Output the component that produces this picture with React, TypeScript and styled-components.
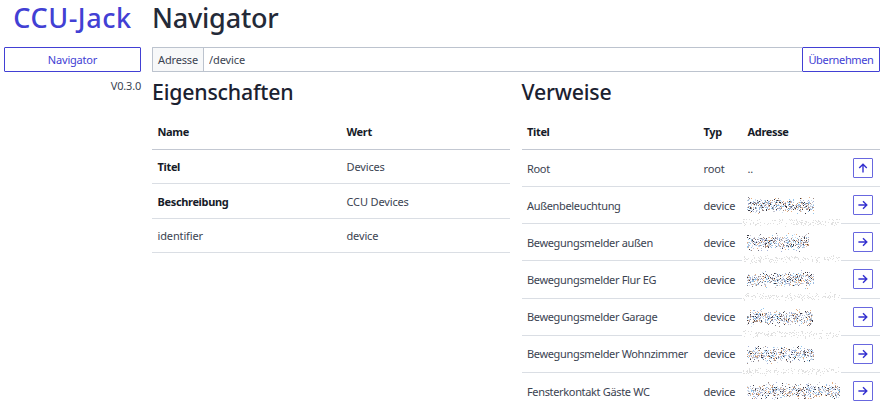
import React from "react";
import styled, { createGlobalStyle } from "styled-components";

const GlobalStyle = createGlobalStyle`
  * { box-sizing: border-box; }
  body {
    margin: 0;
    background: #fff;
    color: #3b4351;
    font: 11px/16px "Segoe UI", "Noto Sans", "Open Sans", sans-serif;
  }
`;

const accent = "#4240d4";

const Page = styled.div`
  display: grid;
  grid-template-columns: 137px 728px;
  column-gap: 11px;
  width: 883px;
  height: 408px;
  padding-left: 4px;
  overflow: hidden;
`;
const Sidebar = styled.aside`
  display: flex;
  flex-direction: column;
`;
const Main = styled.main`
  min-width: 0;
`;
const PageTitle = styled.h1<{ $brand?: boolean }>`
  margin: 0;
  height: 47px;
  font-size: 27px;
  line-height: 35px;
  font-weight: 500;
  white-space: nowrap;
  color: ${(p) => (p.$brand ? accent : "#242a38")};
  text-align: ${(p) => (p.$brand ? "center" : "left")};
  letter-spacing: ${(p) => (p.$brand ? "0.55px" : "-0.2px")};
`;
const NavButton = styled.button`
  height: 25px;
  padding: 0;
  border: 1px solid ${accent};
  border-radius: 1px;
  background: #fff;
  color: ${accent};
  font: inherit;
  letter-spacing: -0.2px;
`;
const Version = styled.div`
  margin-top: 6px;
  text-align: right;
  letter-spacing: -0.2px;
`;
const AddressBar = styled.form`
  display: flex;
  height: 25px;
`;
const AddressLabel = styled.label`
  width: 51px;
  padding: 4px 0 0 5px;
  border: 1px solid #bcc3ce;
  border-right: 0;
  border-radius: 1px 0 0 1px;
  background: #f7f8f9;
  letter-spacing: -0.15px;
`;
const AddressField = styled.input`
  flex: 1;
  min-width: 0;
  padding: 1px 5px 0;
  border: 1px solid #bcc3ce;
  border-right: 0;
  border-radius: 0;
  outline: none;
  background: #fff;
  color: #3b4351;
  font: inherit;
  letter-spacing: -0.1px;
`;
const ApplyButton = styled(NavButton)`
  width: 78px;
  letter-spacing: -0.35px;
`;
const Panels = styled.div`
  display: grid;
  grid-template-columns: 358px 358.5px;
  column-gap: 11.5px;
`;
const SectionTitle = styled.h2`
  margin: 0;
  height: 44px;
  padding-top: 5px;
  font-size: 21.3px;
  line-height: 29px;
  font-weight: 500;
  letter-spacing: -0.2px;
  color: #1b2130;
`;
const Table = styled.div`
  display: flex;
  flex-direction: column;
`;
const Row = styled.div<{ $links?: boolean; $head?: boolean }>`
  display: grid;
  grid-template-columns: ${(p) => (p.$links ? "176.5px 44px 105px 20px" : "189px 1fr")};
  align-items: center;
  height: ${(p) => (p.$head ? "34px" : p.$links ? "37.15px" : "34.35px")};
  padding-left: 5.5px;
  padding-bottom: ${(p) => (p.$head ? "1px" : "0")};
  border-bottom: 1px solid ${(p) => (p.$head ? "#c3c8d2" : "#dadee4")};
  white-space: nowrap;

  > span {
    padding-top: ${(p) => (p.$head ? "0" : "1.4px")};
  }
`;
const Cell = styled.span<{ $bold?: boolean; $title?: boolean }>`
  font-weight: ${(p) => (p.$bold ? 700 : 400)};
  color: ${(p) => (p.$bold ? "#161b28" : "#3b4351")};
  letter-spacing: ${(p) => (p.$title || p.$bold ? "-0.34px" : "-0.14px")};
`;
const IconButton = styled.button`
  display: grid;
  place-items: center;
  width: 20px;
  height: 20px;
  padding: 0;
  border: 1px solid #6867df;
  border-radius: 1px;
  background: #fff;
  color: #3431d0;
`;
const AddressCell = styled.div`
  position: relative;
  height: 100%;
`;
const Scribble = styled.svg`
  position: absolute;
  left: -6px;
  top: -1px;
  width: 102px;
  height: 42px;
  overflow: visible;
`;

const inks = ["#3a3a46", "#777785", "#a08d88", "#e6b185", "#93c6ec", "#a9b4d8", "#c6c6d0", "#cfdff0"];

function randomSource(seed: number) {
  let s = seed * 7919 + 17;
  return () => {
    s = (s + 0x6d2b79f5) | 0;
    let t = Math.imul(s ^ (s >>> 15), 1 | s);
    t = (t + Math.imul(t ^ (t >>> 7), 61 | t)) ^ t;
    return ((t ^ (t >>> 14)) >>> 0) / 4294967296;
  };
}

/** Scattered pixels that hide a device address and part of the rule below it. */
function Redaction({ seed, width, last }: { seed: number; width: number; last?: boolean }) {
  const next = randomSource(seed);
  const paths = inks.map(() => "");
  for (let i = 0; i < width * 7; i++) {
    const x = Math.floor(5 + next() * width);
    const y = Math.floor(9.5 + ((next() + next() + next()) / 3) * 20);
    paths[Math.floor(next() * inks.length)] += `M${x} ${y}h1v1h-1z`;
  }
  let faint = "";
  for (let i = 0; i < 135; i++) {
    const x = Math.floor(1 + next() * 97);
    const y = Math.floor(32 + ((next() + next()) / 2) * 9);
    faint += `M${x} ${y}h1v1h-1z`;
  }
  return (
    <Scribble shapeRendering="crispEdges" aria-hidden="true">
      {!last && <rect x="0" y="35" width="99" height="5" fill="#fff" />}
      {!last && <path d={faint} fill="#e0e0e0" />}
      {paths.map((d, i) => (
        <path key={i} d={d} fill={inks[i]} />
      ))}
    </Scribble>
  );
}

function Arrow({ up }: { up?: boolean }) {
  return (
    <svg width="10" height="10" viewBox="0 0 10 10" fill="none" stroke="currentColor" strokeWidth="1.4">
      {up ? <path d="M5 9.6V1.2M1.2 5 5 1.2 8.8 5" /> : <path d="M.4 5h8.4M5 1.2 8.8 5 5 8.8" />}
    </svg>
  );
}

const properties = [
  { name: "Titel", value: "Devices", bold: true },
  { name: "Beschreibung", value: "CCU Devices", bold: true },
  { name: "identifier", value: "device", bold: false },
];

const links = [
  { title: "Root", type: "root", width: 0 },
  { title: "Außenbeleuchtung", type: "device", width: 67 },
  { title: "Bewegungsmelder außen", type: "device", width: 62 },
  { title: "Bewegungsmelder Flur EG", type: "device", width: 67 },
  { title: "Bewegungsmelder Garage", type: "device", width: 66 },
  { title: "Bewegungsmelder Wohnzimmer", type: "device", width: 67 },
  { title: "Fensterkontakt Gäste WC", type: "device", width: 93 },
];

export default function App() {
  return (
    <>
      <GlobalStyle />
      <Page>
        <Sidebar>
          <PageTitle $brand>CCU-Jack</PageTitle>
          <NavButton>Navigator</NavButton>
          <Version>V0.3.0</Version>
        </Sidebar>
        <Main>
          <PageTitle>Navigator</PageTitle>
          <AddressBar onSubmit={(e) => e.preventDefault()}>
            <AddressLabel htmlFor="address">Adresse</AddressLabel>
            <AddressField id="address" defaultValue="/device" />
            <ApplyButton>Übernehmen</ApplyButton>
          </AddressBar>
          <Panels>
            <section>
              <SectionTitle>Eigenschaften</SectionTitle>
              <Table>
                <Row $head>
                  <Cell $bold>Name</Cell>
                  <Cell $bold>Wert</Cell>
                </Row>
                {properties.map((p) => (
                  <Row key={p.name}>
                    <Cell $bold={p.bold}>{p.name}</Cell>
                    <Cell>{p.value}</Cell>
                  </Row>
                ))}
              </Table>
            </section>
            <section>
              <SectionTitle>Verweise</SectionTitle>
              <Table>
                <Row $links $head>
                  <Cell $bold>Titel</Cell>
                  <Cell $bold>Typ</Cell>
                  <Cell $bold>Adresse</Cell>
                </Row>
                {links.map((l, i) => (
                  <Row $links key={l.title}>
                    <Cell $title>{l.title}</Cell>
                    <Cell>{l.type}</Cell>
                    {l.width ? (
                      <AddressCell>
                        <Redaction seed={i} width={l.width} last={i === links.length - 1} />
                      </AddressCell>
                    ) : (
                      <Cell>..</Cell>
                    )}
                    <IconButton aria-label={l.title}>
                      <Arrow up={i === 0} />
                    </IconButton>
                  </Row>
                ))}
              </Table>
            </section>
          </Panels>
        </Main>
      </Page>
    </>
  );
}
